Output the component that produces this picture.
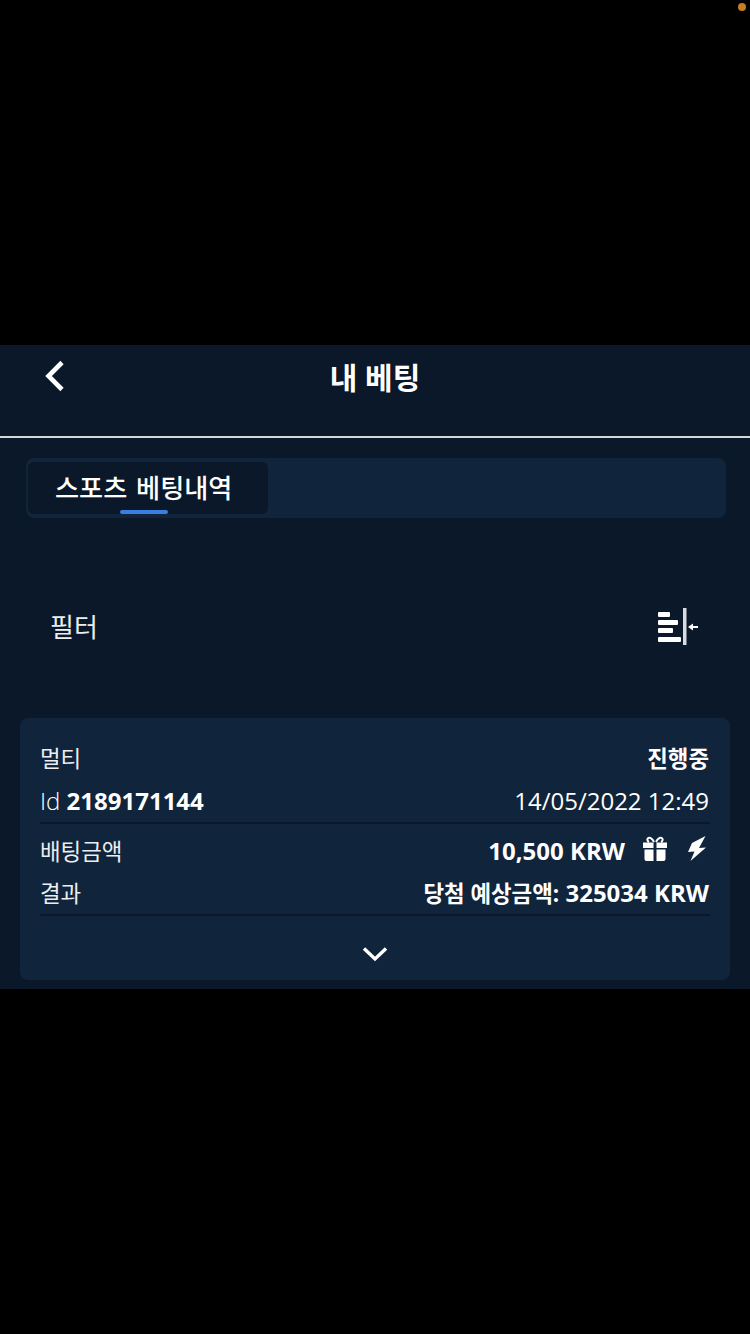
<script lang="ts">
  const rows = [
    { left: "배팅금액", line: false },
    { left: "결과", line: true }
  ];
</script>

<div class="screen">
  <span class="dot"></span>
  <main class="page">
    <header class="top">
      <button class="back" aria-label="뒤로">
        <svg width="24" height="34" viewBox="0 0 24 34">
          <path d="M19 3.500 5.500 17 19 30.500" fill="none" stroke="#fff" stroke-width="4.600" />
        </svg>
      </button>
      <h1>내 베팅</h1>
    </header>

    <div class="tabs">
      <div class="tab">
        스포츠 베팅내역
        <span class="bar"></span>
      </div>
    </div>

    <div class="filter">
      <span class="label">필터</span>
      <svg width="40" height="38" viewBox="0 0 40 38">
        <g fill="#fff">
          <rect x="0" y="4" width="12" height="5" rx="1" />
          <rect x="0" y="12" width="20" height="5" rx="1" />
          <rect x="0" y="20" width="15" height="5" rx="1" />
          <rect x="0" y="29" width="23" height="5" rx="1" />
          <rect x="25" y="0" width="3.500" height="37" fill="#d8dbe2" />
          <path d="M30 19 35 15.500V18h5v2h-5v2.500z" />
        </g>
      </svg>
    </div>

    <section class="card">
      <div class="row">
        <span class="ko">멀티</span>
        <b class="ko end">진행중</b>
      </div>
      <div class="row ruled">
        <span class="thin">Id <b class="id">2189171144</b></span>
        <span class="date end">14/05/2022 12:49</span>
      </div>
      <div class="row second">
        <span class="ko">{rows[0].left}</span>
        <span class="amount">
          <b>10,500 KRW</b>
          <svg class="gift" width="24" height="25" viewBox="0 0 24 25">
            <g fill="#fff">
              <path d="M0 6.500h24V12H13.500V6.500h-3V12H0z" />
              <path d="M1.500 13.500h9V25H3.500a2 2 0 0 1-2-2zM13.500 13.500h9V23a2 2 0 0 1-2 2h-7z" />
            </g>
            <path d="M11 6C9 2.500 7 1.500 5.500 2 3.800 2.600 4 5 6 6M13 6C15 2.500 17 1.500 18.500 2 20.200 2.600 20 5 18 6" fill="none" stroke="#fff" stroke-width="2" />
          </svg>
          <svg class="bolt" width="18" height="25" viewBox="0 0 18 25">
            <path d="M17.500 0 4 7 0 16 6.500 15.500 2.500 25 18 11.500 11 12z" fill="#fff" />
          </svg>
        </span>
      </div>
      <div class="row ruled">
        <span class="ko">{rows[1].left}</span>
        <b class="payout end"><span class="ko">당첨 예상금액:</span> 325034 KRW</b>
      </div>
      <div class="more">
        <svg width="26" height="16" viewBox="0 0 26 16">
          <path d="M2 2.500 13 13 24 2.500" fill="none" stroke="#fff" stroke-width="3.400" />
        </svg>
      </div>
    </section>
  </main>
</div>

<style>
  :global(body) {
    background: #000;
    font-family: "Open Sans", "Noto Sans CJK KR", sans-serif;
    color: #fff;
  }
  .screen {
    height: 1334px;
    padding-top: 345px;
    box-sizing: border-box;
    position: relative;
  }
  .dot {
    position: absolute;
    top: 3px;
    right: 4px;
    width: 8px;
    height: 8px;
    border-radius: 50%;
    background: #c57e22;
  }
  .page {
    height: 644px;
    background: #0a1829;
    box-sizing: border-box;
  }
  .top {
    height: 93px;
    box-sizing: border-box;
    border-bottom: 2px solid #d5d6d8;
    display: flex;
    justify-content: center;
    padding-top: 12px;
    position: relative;
  }
  .back {
    position: absolute;
    left: 43px;
    top: 14px;
    padding: 0;
    border: none;
    background: none;
    line-height: 0;
  }
  h1 {
    margin: 0;
    font-size: 30px;
    line-height: 42px;
    font-weight: 700;
  }
  .tabs {
    margin: 20px 24px 0 26px;
    height: 60px;
    box-sizing: border-box;
    padding: 4px 2px;
    background: #10243c;
    border-radius: 8px;
  }
  .tab {
    width: 240px;
    height: 52px;
    box-sizing: border-box;
    padding: 1px 0 0 27px;
    background: #0a1829;
    border-radius: 6px;
    font-size: 26.200px;
    word-spacing: 2px;
    font-weight: 500;
    line-height: 50px;
    position: relative;
  }
  .bar {
    position: absolute;
    left: 92px;
    bottom: 0;
    width: 48px;
    height: 4px;
    border-radius: 2px;
    background: #3b7de0;
  }
  .filter {
    margin-top: 90px;
    height: 38px;
    padding: 0 52px 0 50px;
    display: flex;
    justify-content: space-between;
    align-items: center;
    font-size: 26px;
  }
  .label {
    margin-bottom: 2px;
    color: #eceef1;
  }
  .card {
    margin: 72px 20px 0;
    height: 262px;
    box-sizing: border-box;
    padding: 18px 20px 0;
    background: #10243c;
    border-radius: 8px;
  }
  .row {
    height: 44px;
    box-sizing: border-box;
    padding-bottom: 2px;
    display: flex;
    justify-content: space-between;
    align-items: center;
    font-size: 24px;
  }
  .ko {
    font-size: 22.400px;
  }
  .row span.ko {
    color: #eceef1;
  }
  .row b {
    font-weight: 700;
  }
  .row .payout span.ko {
    font-weight: 700;
    color: #fff;
  }
  .end {
    margin-right: 1px;
  }
  .ruled {
    border-bottom: 2px solid #0a1829;
  }
  .second {
    margin-top: 6px;
    height: 42px;
  }
  .thin {
    font-weight: 300;
  }
  .date {
    font-weight: 400;
  }
  .amount {
    display: flex;
    align-items: center;
    font-size: 24px;
  }
  .gift {
    margin: 0 0 4px 18px;
  }
  .bolt {
    margin: 0 4px 4px 21px;
  }
  .more {
    display: flex;
    justify-content: center;
    margin-top: 30px;
    line-height: 0;
  }
</style>
